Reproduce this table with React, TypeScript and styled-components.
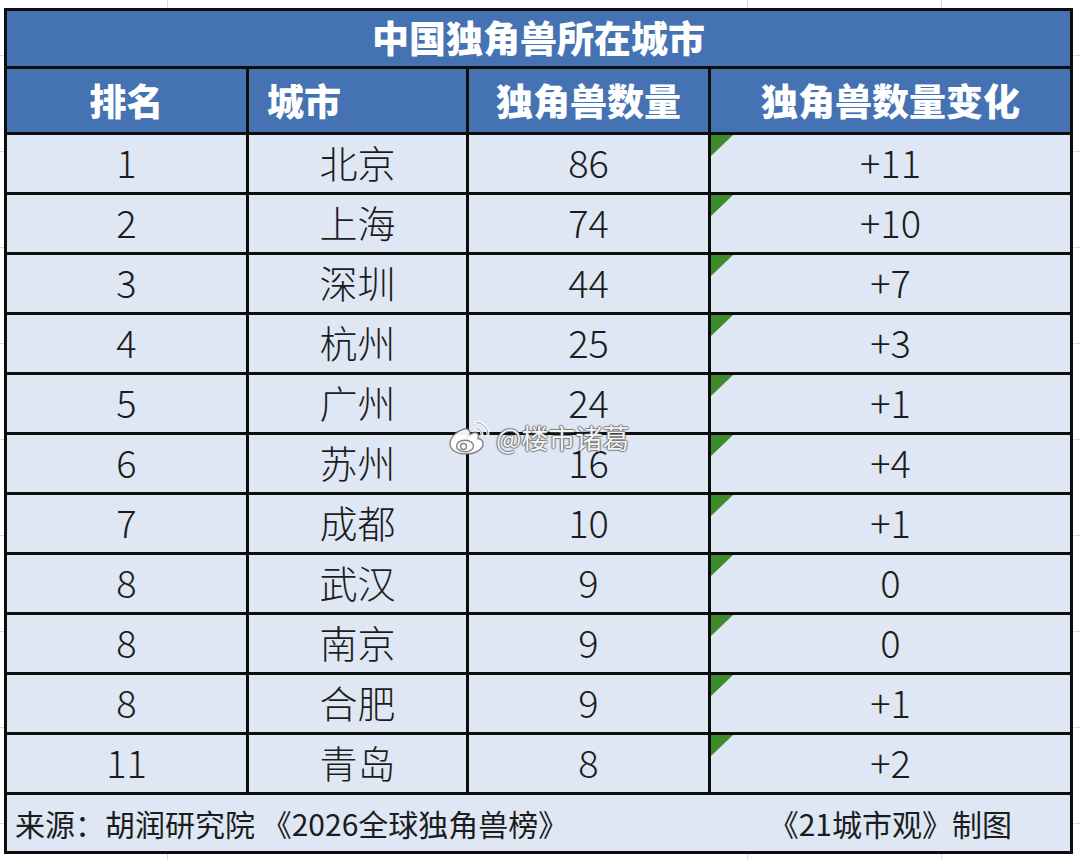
import React from "react";
import styled, { createGlobalStyle } from "styled-components";

const GlobalStyle = createGlobalStyle`
  html, body {
    margin: 0;
    padding: 0;
    background-color: #ffffff;
  }
  body {
    font-family: "Noto Sans CJK SC", "Noto Sans", sans-serif;
    background-image:
      linear-gradient(to right, transparent 167px, #dadada 167px, #dadada 168px, transparent 168px),
      linear-gradient(to right, transparent 747px, #dadada 747px, #dadada 748px, transparent 748px),
      linear-gradient(to right, transparent 941px, #dadada 941px, #dadada 942px, transparent 942px),
      repeating-linear-gradient(to bottom, transparent 0, transparent 55px, #dadada 55px, #dadada 56px, transparent 56px, transparent 96px);
  }
`;

const Page = styled.div`
  width: 1080px;
  height: 860px;
  box-sizing: border-box;
  padding: 8px 0 0 4px;
`;

const Sheet = styled.div`
  position: relative;
  display: inline-grid;
  grid-template-columns: 239px 217px 239px 359px;
  grid-template-rows: 55px 63px repeat(11, 57px) 56px;
  gap: 3px;
  border: 3px solid #0d0d0d;
  background: #0d0d0d;
`;

const Title = styled.div`
  grid-column: 1 / -1;
  background: #4472b2;
  color: #ffffff;
  font-family: "Noto Sans CJK SC", sans-serif;
  font-weight: 900;
  font-size: 37px;
  line-height: 1;
  display: flex;
  align-items: center;
  justify-content: center;
  padding-bottom: 3px;
`;

const HeadCell = styled.div<{ $left?: boolean }>`
  background: #4472b2;
  color: #ffffff;
  font-family: "Noto Sans CJK SC", sans-serif;
  font-weight: 900;
  font-size: 37px;
  line-height: 1;
  display: flex;
  align-items: center;
  justify-content: ${(p) => (p.$left ? "flex-start" : "center")};
  padding-left: ${(p) => (p.$left ? "18px" : "0")};
`;

const Cell = styled.div`
  position: relative;
  background: #dee7f3;
  color: #1c1c1c;
  font-family: "Noto Sans CJK SC", sans-serif;
  font-weight: 300;
  font-size: 38px;
  line-height: 1;
  display: flex;
  align-items: center;
  justify-content: center;
  padding-bottom: 3px;
`;

const Flag = styled.span`
  position: absolute;
  left: 0;
  top: 0;
  width: 22px;
  height: 21px;
  background: #3d8b2a;
  clip-path: polygon(0 0, 100% 0, 0 100%);
`;

const Footer = styled.div`
  grid-column: 1 / -1;
  background: #dee7f3;
  color: #1c1c1c;
  font-family: "Noto Sans CJK SC", sans-serif;
  font-size: 30px;
  line-height: 1;
  display: flex;
  align-items: center;
  justify-content: space-between;
  padding: 0 58px 0 8px;
`;

const Watermark = styled.div`
  position: absolute;
  left: 440px;
  top: 408px;
  display: flex;
  align-items: center;
  gap: 5px;
  pointer-events: none;
`;

const WatermarkText = styled.span`
  font-family: "Noto Sans CJK SC", sans-serif;
  font-size: 27px;
  line-height: 1;
  color: rgba(255, 255, 255, 0.95);
  text-shadow:
    1px 0 1px rgba(90, 90, 90, 0.7),
    -1px 0 1px rgba(90, 90, 90, 0.7),
    0 1px 1px rgba(90, 90, 90, 0.7),
    0 -1px 1px rgba(90, 90, 90, 0.7);
`;

const WeiboLogo = () => (
  <svg width="44" height="36" viewBox="0 0 44 36">
    <g fill="none" stroke="rgba(110,110,110,0.85)" strokeWidth="1.4">
      <path
        d="M17 10 C10 12 3 18 3 25 C3 31 10 35 19 35 C29 35 36 30 36 25 C36 22 34 20 31 19.5 C32.5 16.5 31 13 27.5 13.5 C25 14 23 15.5 23 15.5 C23.5 12 21 9 17 10 Z"
        fill="rgba(255,255,255,0.95)"
      />
      <ellipse cx="18" cy="27" rx="8.5" ry="5.8" fill="rgba(255,255,255,0.95)" />
      <circle cx="16.5" cy="27.5" r="3" fill="rgba(255,255,255,0.95)" />
      <path d="M29 3.5 A12 12 0 0 1 41 16" stroke="rgba(255,255,255,0.95)" strokeWidth="3" strokeLinecap="round" />
      <path d="M29 9.5 A6 6 0 0 1 35 15.5" stroke="rgba(255,255,255,0.95)" strokeWidth="3" strokeLinecap="round" />
      <path d="M29 3.5 A12 12 0 0 1 41 16" strokeWidth="0.8" />
      <path d="M29 9.5 A6 6 0 0 1 35 15.5" strokeWidth="0.8" />
    </g>
  </svg>
);

type Row = { rank: string; city: string; count: string; change: string };

const rows: Row[] = [
  { rank: "1", city: "北京", count: "86", change: "+11" },
  { rank: "2", city: "上海", count: "74", change: "+10" },
  { rank: "3", city: "深圳", count: "44", change: "+7" },
  { rank: "4", city: "杭州", count: "25", change: "+3" },
  { rank: "5", city: "广州", count: "24", change: "+1" },
  { rank: "6", city: "苏州", count: "16", change: "+4" },
  { rank: "7", city: "成都", count: "10", change: "+1" },
  { rank: "8", city: "武汉", count: "9", change: "0" },
  { rank: "8", city: "南京", count: "9", change: "0" },
  { rank: "8", city: "合肥", count: "9", change: "+1" },
  { rank: "11", city: "青岛", count: "8", change: "+2" },
];

export default function App() {
  return (
    <>
      <GlobalStyle />
      <Page>
        <Sheet>
          <Title>中国独角兽所在城市</Title>
          <HeadCell>排名</HeadCell>
          <HeadCell $left>城市</HeadCell>
          <HeadCell>独角兽数量</HeadCell>
          <HeadCell>独角兽数量变化</HeadCell>
          {rows.map((r, i) => (
            <React.Fragment key={i}>
              <Cell>{r.rank}</Cell>
              <Cell>{r.city}</Cell>
              <Cell>{r.count}</Cell>
              <Cell>
                <Flag />
                {r.change}
              </Cell>
            </React.Fragment>
          ))}
          <Footer>
            <span>来源：胡润研究院 《2026全球独角兽榜》</span>
            <span>《21城市观》制图</span>
          </Footer>
          <Watermark>
            <WeiboLogo />
            <WatermarkText>@楼市诸葛</WatermarkText>
          </Watermark>
        </Sheet>
      </Page>
    </>
  );
}
